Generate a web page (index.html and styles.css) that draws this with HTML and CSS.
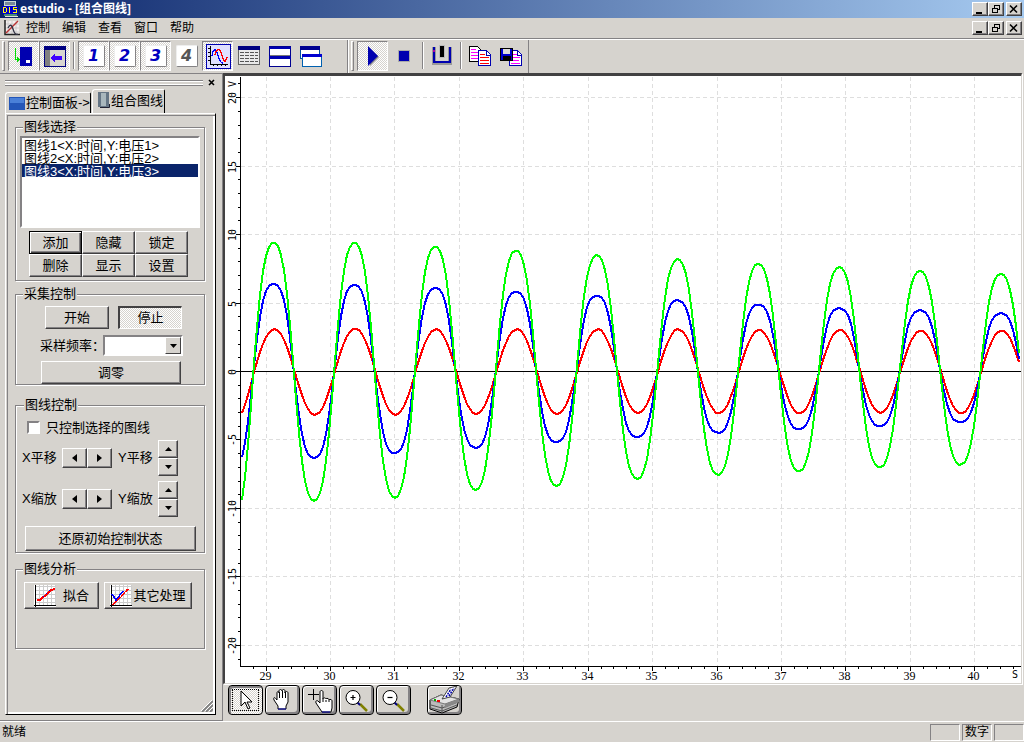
FILE: index.html
```html
<!DOCTYPE html>
<html lang="zh-CN">
<head>
<meta charset="utf-8">
<title>estudio - [组合图线]</title>
<link rel="stylesheet" href="styles.css">
</head>
<body>
<div class="app">
  <header class="titlebar">
    <svg class="app-icon" width="16" height="16" viewBox="0 0 16 16" shape-rendering="crispEdges"><rect x="2" y="0" width="12" height="5" fill="#c8d8d8"/><rect x="3" y="1" width="10" height="3" fill="#778899"/><rect x="0" y="5" width="16" height="8" fill="#00c"/><rect x="2" y="13" width="13" height="2" fill="#4a8a7a"/><rect x="3" y="15" width="13" height="1" fill="#ddd"/><g fill="none" stroke="#ff0" stroke-width="1"><path d="M1.500 6v6M1 6.500h3M1 11.500h3M4.500 7v4M7.500 6v6M15 6.500h-4v2h3.500v3h-4"/></g></svg>
    <h1 class="title">estudio - [组合图线]</h1>
    <div class="win-buttons">
      <button class="win-btn" aria-label="最小化"><svg width="12" height="10"><path d="M2 8h6v2H2z"/></svg></button><button class="win-btn" aria-label="还原"><svg width="12" height="10" shape-rendering="crispEdges" fill="none" stroke="#000"><path d="M4 1h6M4.500 1v3M9.500 1v5M8 5.500h2M2 4h6M2.500 4v5M2 8.500h6M7.500 4v5"/></svg></button><button class="win-btn win-close" aria-label="关闭"><svg width="12" height="10" fill="none" stroke="#000" stroke-width="1.600"><path d="M2 1.500l7 7M9 1.500l-7 7"/></svg></button>
    </div>
  </header>

  <nav class="menubar">
    <svg class="doc-icon" width="16" height="16" viewBox="0 0 16 16"><rect x="1" y="1" width="14" height="14" fill="#f3eeee"/><path d="M4 1v14M8 1v14M12 1v14M1 4h14M1 8h14M1 12h14" stroke="#bbb" stroke-width=".6"/><path d="M1 0v14.500h15" fill="none" stroke="#222" stroke-width="1.500"/><path d="M2 13L14 1" stroke="#b33" stroke-width="1.500" fill="none"/><path d="M4 8q3-6 5 1t5 5" stroke="#334" stroke-width="1.300" fill="none"/></svg>
    <button class="menu">控制</button><button class="menu">编辑</button><button class="menu">查看</button><button class="menu">窗口</button><button class="menu">帮助</button>
    <div class="win-buttons">
      <button class="win-btn" aria-label="最小化子窗口"><svg width="12" height="10"><path d="M2 8h6v2H2z"/></svg></button><button class="win-btn" aria-label="还原子窗口"><svg width="12" height="10" shape-rendering="crispEdges" fill="none" stroke="#000"><path d="M4 1h6M4.500 1v3M9.500 1v5M8 5.500h2M2 4h6M2.500 4v5M2 8.500h6M7.500 4v5"/></svg></button><button class="win-btn win-close" aria-label="关闭子窗口"><svg width="12" height="10" fill="none" stroke="#000" stroke-width="1.600"><path d="M2 1.500l7 7M9 1.500l-7 7"/></svg></button>
    </div>
  </nav>

  <div class="toolbars">
    <div class="toolbar toolbar-main">
      <i class="grip"></i>
      <button class="tool pressed" aria-label="设备"><svg width="24" height="24" shape-rendering="crispEdges"><path d="M3.500 4v12M3 15.500h5" stroke="#0d0" stroke-width="1.500" fill="none"/><path d="M5 12l3 3.500L5 19z" fill="#0d0"/><rect x="8" y="3" width="12" height="19" fill="#0000b0"/><rect x="14" y="16" width="4" height="3" fill="#fff"/></svg></button>
      <button class="tool pressed" aria-label="面板"><svg width="24" height="24" shape-rendering="crispEdges"><rect x="1.500" y="2.500" width="21" height="20" fill="#d8d5d0" stroke="#000080"/><rect x="2" y="6" width="5" height="16" fill="#808080"/><rect x="1" y="2" width="22" height="4" fill="#000080"/><path d="M7 14l5-5v3h7v4h-7v3z" fill="#4000ff"/></svg></button>
      <i class="sep"></i>
      <button class="tool pressed"><span class="keycap">1</span></button>
      <button class="tool pressed"><span class="keycap">2</span></button>
      <button class="tool pressed"><span class="keycap">3</span></button>
      <button class="tool"><span class="keycap off">4</span></button>
      <button class="tool pressed" aria-label="图线"><svg width="26" height="26" shape-rendering="crispEdges"><rect x="1" y="1" width="24" height="24" fill="#e0e0ff" stroke="#0000b0"/><path d="M5.500 3v18.500H23M3 5.500h2M3 9.500h2M3 13.500h2M3 17.500h2M8.500 22v1M12.500 22v1M16.500 22v1M20.500 22v1" stroke="#000" fill="none"/><path d="M7 13c1-8 4-8 6-1s3 8 5 8" fill="none" stroke="#00f" stroke-width="1.300"/><path d="M10 12c2-8 5-7 7 0s3 9 5 2" fill="none" stroke="#f00" stroke-width="1.300"/></svg></button>
      <button class="tool" aria-label="表格"><svg width="24" height="24" shape-rendering="crispEdges"><rect x="1.500" y="3.500" width="21" height="17" fill="#e8e8e8" stroke="#666"/><rect x="1" y="2" width="22" height="4" fill="#000080"/><path d="M3 8.500h18M3 11.500h18M3 14.500h18M3 17.500h18" stroke="#555"/><path d="M7.500 7v12M12.500 7v12M17.500 7v12" stroke="#e8e8e8"/></svg></button>
      <button class="tool" aria-label="平铺"><svg width="24" height="24" shape-rendering="crispEdges"><rect x="1.500" y="2.500" width="21" height="20" fill="#fff" stroke="#000090"/><path d="M1 3h22v2H1zM1 12h22v3H1z" fill="#0000b0"/><path d="M2 11.500h20" stroke="#777"/></svg></button>
      <button class="tool" aria-label="层叠"><svg width="24" height="24" shape-rendering="crispEdges"><rect x="1.500" y="2.500" width="19" height="12" fill="#fff" stroke="#0050a0"/><rect x="1" y="2" width="20" height="4" fill="#000090"/><rect x="3.500" y="10.500" width="19" height="12" fill="#fff" stroke="#0060b0"/><rect x="3" y="10" width="20" height="3" fill="#0000d0"/></svg></button>
    </div>
    <div class="toolbar toolbar-run">
      <i class="grip"></i>
      <button class="tool pressed" aria-label="运行"><svg width="24" height="24"><path d="M9 5l9 8-9 9" fill="#888"/><path d="M7 2l10 10L7 22z" fill="#0000b0"/></svg></button>
      <button class="tool" aria-label="停止运行"><svg width="24" height="24" shape-rendering="crispEdges"><rect x="6" y="6" width="12" height="12" fill="#aaa"/><rect x="7" y="7" width="10" height="10" fill="#0000b0"/></svg></button>
      <i class="sep"></i>
      <button class="tool" aria-label="触发"><svg width="24" height="24" shape-rendering="crispEdges"><path d="M4 3v15.500h16V3" fill="none" stroke="#999" stroke-width="4"/><path d="M4 3v15h16V3" fill="none" stroke="#0000b0" stroke-width="2"/><rect x="9" y="1" width="6" height="13" fill="#bbb"/><rect x="10" y="2" width="4" height="11" fill="#000"/><rect x="3" y="6" width="2" height="2" fill="#a0a"/></svg></button>
      <i class="sep"></i>
      <button class="tool" aria-label="复制"><svg width="24" height="24" shape-rendering="crispEdges"><path d="M1.500 2.500h8l3 3v12h-11z" fill="#fff" stroke="#000"/><path d="M3 5.500h5M3 8.500h7M3 11.500h7M3 14.500h7" stroke="#f0f"/><path d="M10.500 6.500h8l4 4v11h-12z" fill="#fff" stroke="#0000b0"/><path d="M18.500 7v4H22" fill="none" stroke="#0000b0"/><path d="M12 10.500h5M12 13.500h9M12 16.500h9M12 19.500h9" stroke="#f00"/></svg></button>
      <button class="tool" aria-label="保存"><svg width="24" height="24" shape-rendering="crispEdges"><path d="M11.500 6.500h7l4 4v11h-12z" fill="#fff" stroke="#0000b0"/><path d="M18.500 7v4H22" fill="none" stroke="#0000b0"/><path d="M14 10.500h4M14 13.500h7M12 16.500h8M12 19.500h9" stroke="#f0f"/><rect x="1.500" y="4.500" width="12" height="12" fill="#0000d0" stroke="#000"/><rect x="4" y="5" width="7" height="5" fill="#ddd"/><rect x="4" y="12" width="8" height="4" fill="#000"/></svg></button>
    </div>
  </div>

  <main class="workspace">
    <aside class="panel">
      <div class="panel-handle"><i class="handle-lines"></i><button class="panel-close" aria-label="关闭面板"><svg width="7" height="7"><path d="M1 1l5 5M6 1L1 6" stroke="#000" stroke-width="1.600"/></svg></button></div>
      <div class="tabs" role="tablist">
        <button class="tab" role="tab"><svg width="16" height="14"><rect y="1" width="16" height="13" fill="#2456b8"/><rect x="1" y="2" width="14" height="5" fill="#4a80d8"/></svg>控制面板-&gt;</button>
        <button class="tab active" role="tab" aria-selected="true"><svg width="12" height="17"><rect width="11" height="15" fill="#657585"/><rect x="3" y="1" width="5" height="13" fill="#a9b7bd"/><path d="M2 15.500h9.500V12" stroke="#222233" fill="none"/></svg>组合图线</button>
      </div>
      <div class="page">
        <fieldset class="group group-select">
          <legend>图线选择</legend>
          <select class="curves" size="7" aria-label="图线选择">
            <option>图线1&lt;X:时间,Y:电压1&gt;</option>
            <option>图线2&lt;X:时间,Y:电压2&gt;</option>
            <option selected>图线3&lt;X:时间,Y:电压3&gt;</option>
          </select>
          <div class="grid-buttons">
            <button class="btn default">添加</button><button class="btn">隐藏</button><button class="btn">锁定</button>
            <button class="btn">删除</button><button class="btn">显示</button><button class="btn">设置</button>
          </div>
        </fieldset>
        <fieldset class="group group-acquire">
          <legend>采集控制</legend>
          <div class="run-row"><button class="btn">开始</button><button class="btn down">停止</button></div>
          <div class="rate-row"><label for="rate">采样频率：</label><span class="combo"><select id="rate"><option></option></select><i class="combo-arrow"><svg width="7" height="4"><path d="M0 0h7L3.500 4z"/></svg></i></span></div>
          <button class="btn zero">调零</button>
        </fieldset>
        <fieldset class="group group-control">
          <legend>图线控制</legend>
          <label class="check"><input type="checkbox">只控制选择的图线</label>
          <div class="axis-row">
            <span>X平移</span>
            <div class="spin-x"><button class="btn" aria-label="X左移"><svg width="5" height="8"><path d="M5 0v8L0 4z"/></svg></button><button class="btn" aria-label="X右移"><svg width="5" height="8"><path d="M0 0v8l5-4z"/></svg></button></div>
            <span>Y平移</span>
            <div class="spin-y"><button class="btn" aria-label="Y上移"><svg width="7" height="4"><path d="M0 4h7L3.500 0z"/></svg></button><button class="btn" aria-label="Y下移"><svg width="7" height="4"><path d="M0 0h7L3.500 4z"/></svg></button></div>
          </div>
          <div class="axis-row">
            <span>X缩放</span>
            <div class="spin-x"><button class="btn" aria-label="X缩小"><svg width="5" height="8"><path d="M5 0v8L0 4z"/></svg></button><button class="btn" aria-label="X放大"><svg width="5" height="8"><path d="M0 0v8l5-4z"/></svg></button></div>
            <span>Y缩放</span>
            <div class="spin-y"><button class="btn" aria-label="Y放大"><svg width="7" height="4"><path d="M0 4h7L3.500 0z"/></svg></button><button class="btn" aria-label="Y缩小"><svg width="7" height="4"><path d="M0 0h7L3.500 4z"/></svg></button></div>
          </div>
          <button class="btn restore">还原初始控制状态</button>
        </fieldset>
        <fieldset class="group group-analyse">
          <legend>图线分析</legend>
          <div class="analyse-row">
            <button class="btn fit"><svg width="22" height="22" shape-rendering="crispEdges"><rect width="22" height="22" fill="#fff"/><path d="M5.500 0v20M9.500 0v20M13.500 0v20M17.500 0v20M21.500 0v20M2 1.500h20M2 5.500h20M2 9.500h20M2 13.500h20M2 17.500h20" stroke="#ccc"/><path d="M1.500 0v21.500M0 20.500h22" stroke="#000" fill="none"/><path d="M3 15h3l8-7 3-3 4-1" stroke="#f00" stroke-width="2" fill="none"/><path d="M9 12l7-7" stroke="#00f" stroke-dasharray="2 2"/></svg>拟合</button>
            <button class="btn other"><svg width="22" height="22" shape-rendering="crispEdges"><rect width="22" height="22" fill="#fff"/><path d="M5.500 0v20M9.500 0v20M13.500 0v20M17.500 0v20M21.500 0v20M2 1.500h20M2 5.500h20M2 9.500h20M2 13.500h20M2 17.500h20" stroke="#ccc"/><path d="M1.500 0v21.500M0 20.500h22" stroke="#000" fill="none"/><path d="M3 20L18 4" stroke="#f00" stroke-width="1.500" stroke-dasharray="5 1"/><path d="M2 9l4 6 7-9" stroke="#00f" stroke-width="1.500" fill="none"/></svg>其它处理</button>
          </div>
        </fieldset>
        <svg class="size-grip" width="12" height="12"><path d="M1 12L12 1M5 12l7-7M9 12l3-3" stroke="#808080" stroke-width="1.800"/><path d="M0 11L11 0M4 11l8-8M8 11l4-4" stroke="#fff"/></svg>
      </div>
    </aside>

    <section class="view">
      <div class="plot"><svg id="chart" class="chart" role="img" aria-label="电压-时间图线"></svg></div>
      <div class="plot-tools">
        <button class="ptool current" aria-label="选择"><svg width="31" height="26"><path d="M11 4v15l4-4 3 7 2-1-3-6h5z" fill="#fff" stroke="#000"/></svg></button>
        <button class="ptool" aria-label="平移"><svg width="31" height="26"><path d="M11 22v-3l-4-6c-1-3 1-3 2-1l1 1V6c0-2 2-2 2 0V4c0-2 3-2 3 0 0-2 3-2 3 0v2c0-2 3-2 3 0v9l-2 4v3z" fill="#fff" stroke="#000"/><path d="M12.500 5v6M15.500 4v7M18.500 5v6" stroke="#000"/><path d="M11 22h8" stroke="#00a"/></svg></button>
        <button class="ptool" aria-label="测量"><svg width="31" height="26"><path d="M4 7.500h11M9.500 2v11" stroke="#000"/><path d="M16 5c0-2 3-2 3 0v7c0-2 3-1 3 0 0-1 3-1 3 1 0-1 3-1 3 1v7l-1 4H18l-6-9c-1-2 1-3 2-2l2 2z" fill="#fff" stroke="#000"/><path d="M19 12v3M22 13v2M25 13v2" stroke="#000"/><path d="M18 25h8" stroke="#00a"/></svg></button>
        <button class="ptool" aria-label="放大"><svg width="31" height="26"><path d="M19 17l7 7" stroke="#808000" stroke-width="2.500"/><path d="M16 15l3 3" stroke="#000080" stroke-width="2"/><circle cx="12" cy="10.500" r="7" fill="#fff" stroke="#000"/><path d="M9.500 10.500h5M12 8v5" stroke="#000" stroke-width="1.200"/></svg></button>
        <button class="ptool" aria-label="缩小"><svg width="31" height="26"><path d="M19 17l7 7" stroke="#808000" stroke-width="2.500"/><path d="M16 15l3 3" stroke="#000080" stroke-width="2"/><circle cx="12" cy="10.500" r="7" fill="#fff" stroke="#000"/><path d="M9.500 10.500h5" stroke="#000" stroke-width="1.200"/></svg></button>
        <button class="ptool print" aria-label="打印"><svg width="31" height="28"><path d="M1 14l11-5 18 4-2 8-15 6-12-4z" fill="#bbb" stroke="#000"/><path d="M1 14l11-5 18 4-14 5z" fill="#e4e4e4" stroke="#777"/><path d="M13 19v8M2 19l11 3 16-6M2 22l11 3 15-6" stroke="#555" fill="none"/><path d="M16 18l14-5v3l-14 6z" fill="#888"/><path d="M13 13l7-11 8-2-7 11z" fill="#fff" stroke="#444"/><path d="M17 11l5-8M20 10l5-8" stroke="#00a" stroke-width="1.500" stroke-dasharray="2 1"/><path d="M8 15h3" stroke="#e00" stroke-width="2"/><path d="M5 14h2" stroke="#0a0" stroke-width="2"/></svg></button>
      </div>
    </section>
  </main>

  <footer class="statusbar"><span class="status">就绪</span><span class="cell"></span><span class="cell">数字</span><span class="cell"></span></footer>
</div>
<script src="chart.js"></script>
</body>
</html>
```
FILE: styles.css
```css
* { box-sizing: border-box; }
:root {
  --face: #d6d3ce;
  --shade: #848284;
  --dark: #424142;
  --navy: #0a246a;
  --dither: repeating-conic-gradient(#fff 0 25%, var(--face) 0 50%) 0 0 / 2px 2px;
}
body {
  margin: 0;
  background: var(--face);
  color: #000;
  font: 13px/14px "Liberation Sans", "Noto Sans CJK SC", sans-serif;
}
button, select, input { font: inherit; color: inherit; margin: 0; }
button { background: var(--face); border: 0; padding: 0; white-space: nowrap; }
svg { display: block; flex: none; }
.app { display: flex; flex-direction: column; height: 100vh; }

.titlebar {
  display: flex;
  align-items: center;
  height: 18px;
  padding: 0 2px;
  gap: 2px;
  background: linear-gradient(90deg, var(--navy), #a6caf0);
}
.title { margin: 0; color: #fff; font: bold 12px/18px "Noto Sans", "Noto Sans CJK SC", sans-serif; }
.win-buttons { display: flex; margin-left: auto; }
.win-btn {
  display: flex;
  justify-content: center;
  width: 16px;
  height: 14px;
  padding-top: 1px;
  border: 1px solid;
  border-color: #fff var(--dark) var(--dark) #fff;
  box-shadow: inset -1px -1px var(--shade);
}
.win-close { margin-left: 2px; }

.menubar {
  display: flex;
  align-items: center;
  height: 21px;
  padding: 0 2px;
  font-size: 12px;
  border-bottom: 1px solid var(--shade);
}
.doc-icon { margin: 0 6px 0 2px; }
.menu { margin-right: 12px; }

.toolbars { display: flex; height: 34px; border-top: 1px solid #fff; }
.toolbar { display: flex; align-items: center; padding: 0 0 2px 2px; border-right: 1px solid var(--shade); }
.toolbar-main { flex: 0 0 348px; }
.toolbar-run { padding-right: 2px; border-left: 1px solid #fff; }
.grip {
  width: 3px;
  height: 30px;
  margin-right: 3px;
  border: 1px solid;
  border-color: #fff var(--shade) var(--shade) #fff;
}
.sep { width: 2px; height: 27px; margin: 0 3px; border-left: 1px solid var(--shade); border-right: 1px solid #fff; }
.toolbar-run .sep { margin: 0 2px 0 3px; }
.tool {
  display: flex;
  flex: none;
  align-items: center;
  justify-content: center;
  width: 31px;
  height: 30px;
}
.tool.pressed {
  background: var(--dither);
  border: 1px solid;
  border-color: var(--shade) #fff #fff var(--shade);
}
.keycap {
  width: 22px;
  height: 22px;
  background: #fff;
  border: 1px solid;
  border-color: #eee var(--shade) var(--shade) #eee;
  border-radius: 2px;
  color: #0000c0;
  font: italic bold 16px/19px "DejaVu Sans", sans-serif;
}
.keycap.off { color: #555; }

.workspace { display: flex; flex: 1; min-height: 0; }
.panel {
  display: flex;
  flex-direction: column;
  flex: 0 0 222px;
  padding: 4px 5px 5px;
  border-top: 1px solid var(--shade);
  border-bottom: 1px solid var(--shade);
}
.panel-handle { display: flex; align-items: center; gap: 5px; height: 9px; }
.handle-lines {
  flex: 0 0 198px;
  height: 6px;
  border: solid var(--shade);
  border-width: 1px 0;
  background: linear-gradient(#fff 1px, transparent 1px 3px, #fff 3px);
}
.tabs { display: flex; align-items: flex-end; height: 26px; padding-top: 2px; }
.tab {
  display: flex;
  align-items: center;
  gap: 1px;
  height: 21px;
  padding: 0 0 0 3px;
  border: 1px solid;
  border-color: #fff #000 var(--face) #fff;
  border-bottom: 0;
  border-radius: 3px 2px 0 0;
}
.tab.active { height: 24px; gap: 1px; padding: 0 1px 2px 5px; margin-left: 1px; }
.page {
  position: relative;
  flex: 1;
  width: 211px;
  padding: 6px 7px 3px;
  border: 1px solid;
  border-color: #fff #000 #000 #fff;
  box-shadow: inset 1px 1px var(--face), inset 2px 2px var(--shade), inset -2px -2px #fff;
}
.size-grip { position: absolute; right: 2px; bottom: 2px; }

.group {
  min-width: 0;
  margin: 0 3px 6px 2px;
  padding: 2px 4px 3px;
  border: 1px solid var(--shade);
  box-shadow: 1px 1px #fff, inset 1px 1px #fff;
}
.group legend { padding: 0 1px; margin-left: 3px; background: var(--face); }
.btn {
  display: flex;
  align-items: center;
  justify-content: center;
  height: 23px;
  border: solid;
  border-width: 1px;
  border-color: #fff var(--dark) var(--dark) #fff;
  box-shadow: inset -1px -1px var(--shade);
}
.btn.down { background: var(--dither); border-width: 2px 1px 1px 2px; border-color: var(--dark) #fff #fff var(--dark); box-shadow: none; }
.btn.default { border: 1px solid #000; box-shadow: inset 1px 1px #fff, inset -1px -1px var(--dark), inset -2px -2px var(--shade); }

.curves {
  display: block;
  width: 180px;
  height: 92px;
  padding: 0;
  background: #fff;
  border: 2px solid;
  border-color: var(--shade) #fff #fff var(--shade);
  border-radius: 0;
  outline: none;
  overflow: hidden;
}
.curves option {
  display: flex;
  align-items: center;
  min-height: 13px;
  height: 13px;
  padding: 0 2px;
  overflow: visible;
}
.curves option:checked { color: #fff; background: var(--navy) linear-gradient(var(--navy), var(--navy)); }
.grid-buttons { display: grid; grid-template-columns: repeat(3, 1fr); margin: 3px 12px 0 9px; }

.group-acquire { padding: 5px 4px 0; margin-bottom: 13px; }
.run-row { display: flex; gap: 9px; padding-left: 25px; }
.run-row .btn { width: 64px; }
.rate-row { display: flex; align-items: center; margin: 6px 0 5px 20px; height: 21px; }
.rate-row label { flex: 0 0 64px; width: 64px; white-space: nowrap; }
.combo { display: flex; flex: none; width: 80px; height: 21px; margin-left: -1px; border: 2px solid; border-color: var(--shade) #fff #fff var(--shade); background: #fff; }
.combo select { flex: 1; min-width: 0; border: 0; background: #fff; appearance: none; }
.combo-arrow {
  display: flex;
  align-items: center;
  justify-content: center;
  width: 16px;
  border: 1px solid;
  border-color: #fff var(--dark) var(--dark) #fff;
  background: var(--face);
  pointer-events: none;
}
.zero { width: 140px; margin-left: 21px; }

.group-control { padding: 6px 5px 1px; margin-bottom: 9px; }
.check { display: flex; align-items: center; gap: 6px; height: 19px; padding-left: 6px; }
.check input {
  appearance: none;
  width: 13px;
  height: 13px;
  background: #fff;
  border: 2px solid;
  border-color: var(--shade) #fff #fff var(--shade);
}
.axis-row { display: flex; align-items: center; height: 37px; margin: 2px 0 4px 1px; }
.axis-row span { width: 40px; white-space: nowrap; }
.spin-x { display: flex; margin-right: 6px; }
.spin-x .btn { width: 25px; height: 20px; }
.spin-y .btn { width: 20px; height: 18px; }
.restore { width: 171px; height: 25px; margin: 9px 0 0 4px; }

.group-analyse { padding: 6px 4px 39px; margin-bottom: 0; }
.analyse-row { display: flex; gap: 5px; padding-left: 4px; }
.analyse-row .btn { height: 27px; }
.fit { width: 75px; gap: 7px; }
.other { width: 88px; gap: 1px; }

.view { display: flex; flex-direction: column; flex: 1; min-width: 0; border-left: 1px solid var(--shade); }
.plot {
  flex: 1;
  min-height: 0;
  margin-right: 2px;
  background: #fff;
  border: solid;
  border-width: 3px 1px 1px 2px;
  border-color: var(--dark) var(--face) var(--face) var(--dark);
  box-shadow: 1px 1px #fff;
}
.chart { width: 100%; height: 100%; overflow: hidden; }
.chart text { font: 12px "Liberation Serif", serif; text-anchor: middle; }
.chart .y-label { font: 10px "DejaVu Sans Mono", monospace; }
.chart path { fill: none; shape-rendering: crispEdges; }
.grid { stroke: #dedede; stroke-dasharray: 4 3; }
.axis { stroke: #000; }
.curve { stroke-width: 2; }
.red { stroke: #f00; }
.blue { stroke: #00f; }
.green { stroke: #0f0; }

.plot-tools { display: flex; gap: 2px; height: 37px; padding: 1px 0 5px 5px; }
.ptool {
  display: flex;
  align-items: center;
  justify-content: center;
  width: 35px;
  height: 30px;
  border: 1px solid #000;
  border-radius: 4px;
  box-shadow: inset 1px 1px #fff, inset -2px -2px var(--shade);
}
.ptool.current { background: var(--dither); outline: 1px dotted #000; outline-offset: -5px; box-shadow: inset 2px 2px var(--shade); }
.ptool.print { margin-left: 14px; }

.statusbar {
  display: flex;
  align-items: center;
  gap: 2px;
  height: 22px;
  border-top: 1px solid #fff;
  border-bottom: 1px solid #fff;
  font-size: 12px;
}
.status { flex: 1; padding-left: 2px; }
.cell { width: 30px; height: 17px; border: 1px solid; border-color: var(--shade) #fff #fff var(--shade); text-align: center; }
```
FILE: chart.js
```js
// Draws the voltage/time curves to fill the plot area.
const svg = document.getElementById('chart');
const NS = 'http://www.w3.org/2000/svg';
const PERIOD = 1.2539;

// Successive peak and trough voltages, starting from the trough before t = 28.8 s.
const curves = [
  { name: 'red', start: 28.825, third: 0.01,
    v: [-3.7, 3.05, -3.2, 3.1, -3.2, 3.05, -3.15, 3.05, -3.15, 3.05, -3.1, 3.05, -3.1, 3, -3.1, 3, -3.05, 2.95, -3.1, 2.95, -3.05, 2.9, -3] },
  { name: 'blue', start: 28.812, third: 0.08,
    v: [-7.1, 6.35, -6.35, 6.3, -6, 6.05, -5.6, 5.8, -5.2, 5.5, -4.85, 5.15, -4.5, 4.85, -4.25, 4.6, -4, 4.45, -3.75, 4.2, -3.6] },
  { name: 'green', start: 28.812, third: 0.06,
    v: [-11, 9.4, -9.5, 9.35, -9.25, 9.1, -8.7, 8.8, -8.4, 8.45, -7.9, 8.15, -7.6, 7.85, -7.35, 7.6, -7.05, 7.3, -6.85, 7.1, -6.6] }
];

function add(tag, attrs, text) {
  const el = document.createElementNS(NS, tag);
  for (const k in attrs) el.setAttribute(k, attrs[k]);
  if (text !== undefined) el.textContent = text;
  svg.append(el);
}

function valueAt(c, t) {
  const phase = (t - c.start) / (PERIOD / 2);
  const half = Math.floor(phase);
  const a = Math.PI * (phase - half);
  const shape = (Math.sin(a) + c.third * Math.sin(3 * a)) / (1 - c.third);
  return c.v[half + 1] * shape;
}

function draw() {
  svg.replaceChildren();
  const w = svg.clientWidth, h = svg.clientHeight;
  const left = 16, bottom = h - 16;
  const zero = Math.round(h * 0.486), perVolt = h * 0.02256;
  const perSec = w * 0.08095, x29 = 40.5;
  const X = t => x29 + (t - 29) * perSec;
  const Y = v => zero - v * perVolt;
  const snap = n => Math.round(n) + 0.5;

  let grid = '', axis = `M${left - .5} 1V${bottom}M${left - 1} ${bottom - .5}H${w}M${left} ${zero + .5}H${w}`;
  for (let v = -21; v <= 21; v++) {
    const major = v % 5 === 0;
    axis += `M${left} ${snap(Y(v))}h${major ? -5 : -3}`;
    if (major) {
      if (v) grid += `M${left} ${snap(Y(v))}H${w}`;
      add('text', { class: 'y-label', transform: `translate(11 ${Math.round(Y(v)) + 1}) rotate(-90)` }, v);
    }
  }
  for (let i = -1; X(29 + i / 5) < w; i++) {
    const x = snap(X(29 + i / 5));
    const major = i % 5 === 0;
    axis += `M${x} ${bottom}v${major ? 4 : 2}`;
    if (major) {
      grid += `M${x} 1V${bottom}`;
      add('text', { x: x - 1, y: bottom + 13 }, 29 + i / 5);
    }
  }
  add('text', { class: 'y-label', transform: 'translate(11 8) rotate(-90)' }, 'V');
  add('text', { class: 'y-label', x: w - 6, y: bottom + 11 }, 'S');
  add('path', { class: 'grid', d: grid });
  add('path', { class: 'axis', d: axis });

  for (const c of curves) {
    let d = '';
    for (let x = left + 1; x <= w; x += 3) {
      const t = 29 + (x - x29) / perSec;
      d += `${d ? 'L' : 'M'}${x} ${Math.round(Y(valueAt(c, t)))}`;
    }
    add('path', { class: `curve ${c.name}`, d });
  }
}

draw();
new ResizeObserver(draw).observe(svg);
```
